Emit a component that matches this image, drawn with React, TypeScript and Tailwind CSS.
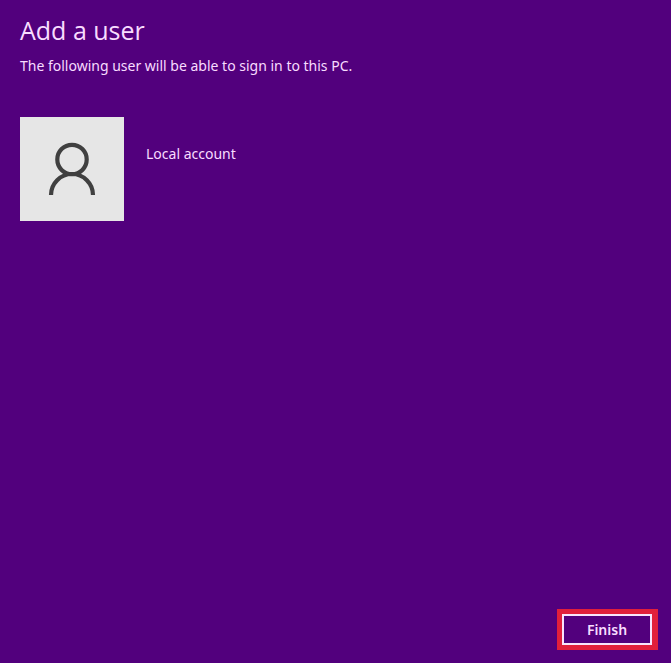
function UserIcon() {
  return (
    <svg viewBox="0 0 104 104" className="size-full" fill="none" stroke="#404040" strokeWidth="4.2" aria-hidden="true">
      <circle cx="52" cy="42.5" r="14.7" />
      <path d="M31 78a21 21 0 0 1 42 0" />
    </svg>
  );
}

export default function App() {
  return (
    <main className="flex min-h-screen flex-col bg-[#52007d] px-5 pt-3 font-['Noto_Sans','Open_Sans',sans-serif] text-sm text-[#f8dcff]">
      <h1 className="font-['Open_Sans','Noto_Sans',sans-serif] text-[25px] leading-9 font-normal">Add a user</h1>
      <p className="mt-2 leading-5">The following user will be able to sign in to this PC.</p>

      {/* Account */}
      <section className="mt-[41px] flex items-start gap-[22px]">
        <div className="size-[104px] bg-[#e6e6e6]">
          <UserIcon />
        </div>
        <h2 className="mt-[27px] leading-5">Local account</h2>
      </section>

      {/* Actions */}
      <footer className="-mr-[7px] mt-auto flex justify-end pb-[13px]">
        <div className="border-[5px] border-r-[6px] border-[#e11f3b]">
          <button
            type="button"
            className="block h-[31px] w-[90px] border-2 border-[#f8e4fc] text-sm leading-5 font-semibold"
          >
            Finish
          </button>
        </div>
      </footer>
    </main>
  );
}
